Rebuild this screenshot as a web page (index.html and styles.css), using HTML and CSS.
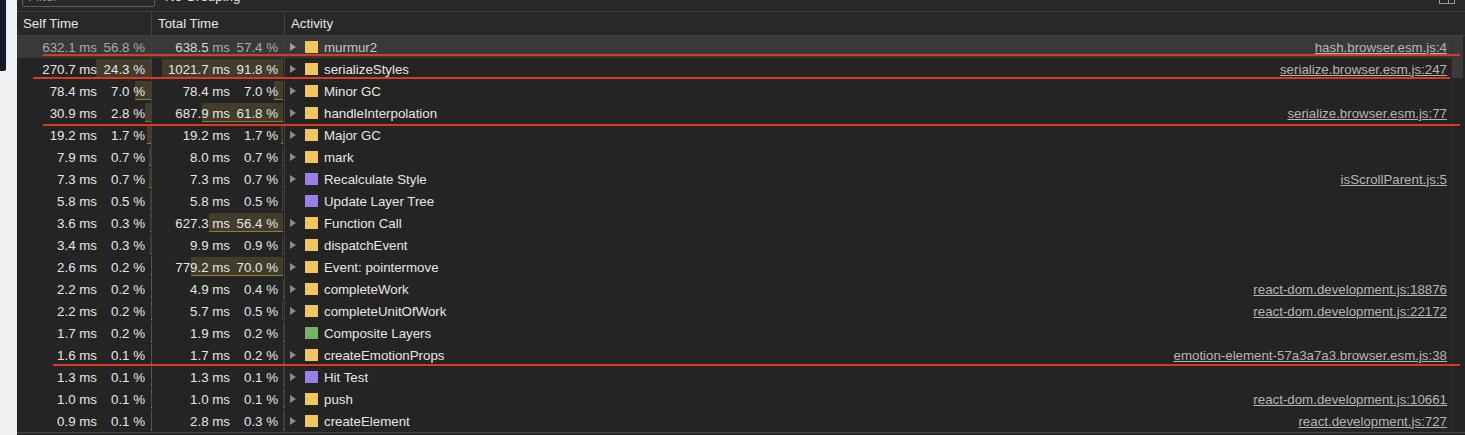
FILE: index.html
```
<!DOCTYPE html>
<html>
<head>
<meta charset="utf-8">
<link rel="stylesheet" href="styles.css">
</head>
<body>
<div class="page">
  <div class="side"><div class="nav"></div></div>
  <div class="panel">
    <div class="toolbar">
      <div class="filter">Filter</div>
      <div class="grouping">No Grouping</div>
      <svg class="dock" width="16" height="13" viewBox="0 0 16 13"><rect x="0.5" y="0.5" width="15" height="12" fill="none" stroke="#9a9a9a"/><line x1="9.5" y1="1" x2="9.5" y2="12" stroke="#9a9a9a"/></svg>
    </div>
    <div class="header">
      <div class="hcell">Self Time</div>
      <div class="hcell">Total Time</div>
      <div class="hcell last">Activity</div>
    </div>
    <div class="body">
      <div class="rows">
        <div class="row sel">
          <div class="cell num"><span class="ms">632.1 ms</span><span class="pct">56.8 %</span></div>
          <div class="cell num tot"><span class="ms"><span class="hi">638.5</span> ms</span><span class="pct">57.4 %</span></div>
          <div class="cell act"><span class="tw"><svg width="6" height="8" viewBox="0 0 6 8"><path d="M0 0L6 4L0 8Z"/></svg></span><span class="sw y"></span><span class="name">murmur2</span><span class="link">hash.browser.esm.js:4</span></div>
        </div>
        <div class="row">
          <div class="cell num"><span class="bar" style="width:55px"></span><span class="ms">270.7 ms</span><span class="pct">24.3 %</span></div>
          <div class="cell num tot"><span class="bar" style="width:121px"></span><span class="ms">1021.7 ms</span><span class="pct">91.8 %</span></div>
          <div class="cell act"><span class="tw"><svg width="6" height="8" viewBox="0 0 6 8"><path d="M0 0L6 4L0 8Z"/></svg></span><span class="sw y"></span><span class="name">serializeStyles</span><span class="link">serialize.browser.esm.js:247</span></div>
        </div>
        <div class="row">
          <div class="cell num"><span class="bar" style="width:16px"></span><span class="ms">78.4 ms</span><span class="pct">7.0 %</span></div>
          <div class="cell num tot"><span class="bar" style="width:9px"></span><span class="ms">78.4 ms</span><span class="pct">7.0 %</span></div>
          <div class="cell act"><span class="tw"><svg width="6" height="8" viewBox="0 0 6 8"><path d="M0 0L6 4L0 8Z"/></svg></span><span class="sw y"></span><span class="name">Minor GC</span></div>
        </div>
        <div class="row">
          <div class="cell num"><span class="bar" style="width:6px"></span><span class="ms">30.9 ms</span><span class="pct">2.8 %</span></div>
          <div class="cell num tot"><span class="bar" style="width:81px"></span><span class="ms">687.9 ms</span><span class="pct">61.8 %</span></div>
          <div class="cell act"><span class="tw"><svg width="6" height="8" viewBox="0 0 6 8"><path d="M0 0L6 4L0 8Z"/></svg></span><span class="sw y"></span><span class="name">handleInterpolation</span><span class="link">serialize.browser.esm.js:77</span></div>
        </div>
        <div class="row">
          <div class="cell num"><span class="bar" style="width:4px"></span><span class="ms">19.2 ms</span><span class="pct">1.7 %</span></div>
          <div class="cell num tot"><span class="bar" style="width:2px"></span><span class="ms">19.2 ms</span><span class="pct">1.7 %</span></div>
          <div class="cell act"><span class="tw"><svg width="6" height="8" viewBox="0 0 6 8"><path d="M0 0L6 4L0 8Z"/></svg></span><span class="sw y"></span><span class="name">Major GC</span></div>
        </div>
        <div class="row">
          <div class="cell num"><span class="bar" style="width:2px"></span><span class="ms">7.9 ms</span><span class="pct">0.7 %</span></div>
          <div class="cell num tot"><span class="bar" style="width:1px"></span><span class="ms">8.0 ms</span><span class="pct">0.7 %</span></div>
          <div class="cell act"><span class="tw"><svg width="6" height="8" viewBox="0 0 6 8"><path d="M0 0L6 4L0 8Z"/></svg></span><span class="sw y"></span><span class="name">mark</span></div>
        </div>
        <div class="row">
          <div class="cell num"><span class="bar" style="width:2px"></span><span class="ms">7.3 ms</span><span class="pct">0.7 %</span></div>
          <div class="cell num tot"><span class="bar" style="width:1px"></span><span class="ms">7.3 ms</span><span class="pct">0.7 %</span></div>
          <div class="cell act"><span class="tw"><svg width="6" height="8" viewBox="0 0 6 8"><path d="M0 0L6 4L0 8Z"/></svg></span><span class="sw p"></span><span class="name">Recalculate Style</span><span class="link">isScrollParent.js:5</span></div>
        </div>
        <div class="row">
          <div class="cell num"><span class="bar" style="width:1px"></span><span class="ms">5.8 ms</span><span class="pct">0.5 %</span></div>
          <div class="cell num tot"><span class="bar" style="width:0.7px"></span><span class="ms">5.8 ms</span><span class="pct">0.5 %</span></div>
          <div class="cell act"><span class="tw"></span><span class="sw p"></span><span class="name">Update Layer Tree</span></div>
        </div>
        <div class="row">
          <div class="cell num"><span class="bar" style="width:0.7px"></span><span class="ms">3.6 ms</span><span class="pct">0.3 %</span></div>
          <div class="cell num tot"><span class="bar" style="width:74px"></span><span class="ms">627.3 ms</span><span class="pct">56.4 %</span></div>
          <div class="cell act"><span class="tw"><svg width="6" height="8" viewBox="0 0 6 8"><path d="M0 0L6 4L0 8Z"/></svg></span><span class="sw y"></span><span class="name">Function Call</span></div>
        </div>
        <div class="row">
          <div class="cell num"><span class="bar" style="width:0.7px"></span><span class="ms">3.4 ms</span><span class="pct">0.3 %</span></div>
          <div class="cell num tot"><span class="bar" style="width:1.2px"></span><span class="ms">9.9 ms</span><span class="pct">0.9 %</span></div>
          <div class="cell act"><span class="tw"><svg width="6" height="8" viewBox="0 0 6 8"><path d="M0 0L6 4L0 8Z"/></svg></span><span class="sw y"></span><span class="name">dispatchEvent</span></div>
        </div>
        <div class="row">
          <div class="cell num"><span class="bar" style="width:0.5px"></span><span class="ms">2.6 ms</span><span class="pct">0.2 %</span></div>
          <div class="cell num tot"><span class="bar" style="width:92px"></span><span class="ms">779.2 ms</span><span class="pct">70.0 %</span></div>
          <div class="cell act"><span class="tw"><svg width="6" height="8" viewBox="0 0 6 8"><path d="M0 0L6 4L0 8Z"/></svg></span><span class="sw y"></span><span class="name">Event: pointermove</span></div>
        </div>
        <div class="row">
          <div class="cell num"><span class="bar" style="width:0.5px"></span><span class="ms">2.2 ms</span><span class="pct">0.2 %</span></div>
          <div class="cell num tot"><span class="bar" style="width:0.5px"></span><span class="ms">4.9 ms</span><span class="pct">0.4 %</span></div>
          <div class="cell act"><span class="tw"><svg width="6" height="8" viewBox="0 0 6 8"><path d="M0 0L6 4L0 8Z"/></svg></span><span class="sw y"></span><span class="name">completeWork</span><span class="link">react-dom.development.js:18876</span></div>
        </div>
        <div class="row">
          <div class="cell num"><span class="bar" style="width:0.5px"></span><span class="ms">2.2 ms</span><span class="pct">0.2 %</span></div>
          <div class="cell num tot"><span class="bar" style="width:0.7px"></span><span class="ms">5.7 ms</span><span class="pct">0.5 %</span></div>
          <div class="cell act"><span class="tw"><svg width="6" height="8" viewBox="0 0 6 8"><path d="M0 0L6 4L0 8Z"/></svg></span><span class="sw y"></span><span class="name">completeUnitOfWork</span><span class="link">react-dom.development.js:22172</span></div>
        </div>
        <div class="row">
          <div class="cell num"><span class="bar" style="width:0.5px"></span><span class="ms">1.7 ms</span><span class="pct">0.2 %</span></div>
          <div class="cell num tot"><span class="bar" style="width:0.3px"></span><span class="ms">1.9 ms</span><span class="pct">0.2 %</span></div>
          <div class="cell act"><span class="tw"></span><span class="sw g"></span><span class="name">Composite Layers</span></div>
        </div>
        <div class="row">
          <div class="cell num"><span class="bar" style="width:0.3px"></span><span class="ms">1.6 ms</span><span class="pct">0.1 %</span></div>
          <div class="cell num tot"><span class="bar" style="width:0.3px"></span><span class="ms">1.7 ms</span><span class="pct">0.2 %</span></div>
          <div class="cell act"><span class="tw"><svg width="6" height="8" viewBox="0 0 6 8"><path d="M0 0L6 4L0 8Z"/></svg></span><span class="sw y"></span><span class="name">createEmotionProps</span><span class="link">emotion-element-57a3a7a3.browser.esm.js:38</span></div>
        </div>
        <div class="row">
          <div class="cell num"><span class="bar" style="width:0.3px"></span><span class="ms">1.3 ms</span><span class="pct">0.1 %</span></div>
          <div class="cell num tot"><span class="bar" style="width:0.2px"></span><span class="ms">1.3 ms</span><span class="pct">0.1 %</span></div>
          <div class="cell act"><span class="tw"><svg width="6" height="8" viewBox="0 0 6 8"><path d="M0 0L6 4L0 8Z"/></svg></span><span class="sw p"></span><span class="name">Hit Test</span></div>
        </div>
        <div class="row">
          <div class="cell num"><span class="bar" style="width:0.3px"></span><span class="ms">1.0 ms</span><span class="pct">0.1 %</span></div>
          <div class="cell num tot"><span class="bar" style="width:0.2px"></span><span class="ms">1.0 ms</span><span class="pct">0.1 %</span></div>
          <div class="cell act"><span class="tw"><svg width="6" height="8" viewBox="0 0 6 8"><path d="M0 0L6 4L0 8Z"/></svg></span><span class="sw y"></span><span class="name">push</span><span class="link">react-dom.development.js:10661</span></div>
        </div>
        <div class="row">
          <div class="cell num"><span class="bar" style="width:0.3px"></span><span class="ms">0.9 ms</span><span class="pct">0.1 %</span></div>
          <div class="cell num tot"><span class="bar" style="width:0.4px"></span><span class="ms">2.8 ms</span><span class="pct">0.3 %</span></div>
          <div class="cell act"><span class="tw"><svg width="6" height="8" viewBox="0 0 6 8"><path d="M0 0L6 4L0 8Z"/></svg></span><span class="sw y"></span><span class="name">createElement</span><span class="link">react.development.js:727</span></div>
        </div>
      </div>
      <div class="scroll"><div class="thumb"></div></div>
    </div>
    <div class="footer"></div>
  </div>
  <div class="mark m1"></div>
  <div class="mark m2"></div>
  <div class="mark m3"></div>
  <div class="mark m4"></div>
</div>
</body>
</html>
```
FILE: styles.css
```
* { box-sizing: border-box; }
html, body { margin: 0; padding: 0; }
body {
  font-family: "Liberation Sans", Arial, sans-serif;
  font-size: 13.3px;
  background: #eff0f2;
  overflow: hidden;
}
.page {
  position: relative;
  display: flex;
  width: 1465px;
  height: 435px;
}
.side { width: 17px; flex: none; background: #eff0f2; }
.nav { width: 6px; height: 71px; background: #141a2c; border-bottom-right-radius: 2px; }
.panel {
  flex: 1;
  min-width: 0;
  display: flex;
  flex-direction: column;
  background: #242424;
  color: #e6e6e6;
}
.toolbar {
  height: 12px;
  flex: none;
  display: flex;
  align-items: flex-end;
  padding: 0 0 4px 5px;
  border-bottom: 1px solid #3c3c3c;
  overflow: hidden;
  background: #282828;
}
.filter {
  width: 133px;
  height: 20px;
  flex: none;
  border: 1px solid #5f5f5f;
  border-radius: 2px;
  color: #9a9a9a;
  padding-left: 5px;
  line-height: 18px;
}
.grouping { margin-left: 10px; height: 20px; line-height: 20px; flex: none; }
.dock { margin-left: auto; margin-right: 10px; margin-bottom: 3px; flex: none; }
.header {
  height: 24px;
  flex: none;
  display: grid;
  grid-template-columns: 135px 133px 1fr;
  border-bottom: 1px solid #3c3c3c;
  background: #282828;
}
.hcell { padding-left: 6px; line-height: 23px; border-right: 1px solid #424242; }
.hcell.last { border-right: none; }
.body { flex: 1; min-height: 0; display: flex; }
.rows { flex: 1; min-width: 0; }
.row {
  display: grid;
  grid-template-columns: 135px 133px 1fr;
  height: 22px;
}
.row.sel { background: #393939; color: #a9a9a9; }
.row.sel .hi { color: #d6d6d6; }
.row.sel .name { color: #c4c4c4; }
.cell { position: relative; display: flex; align-items: center; min-width: 0; }
.num {
  justify-content: flex-end;
  padding-right: 6px;
  border-right: 1px solid #3f3f3f;
}
.ms, .pct { position: relative; white-space: nowrap; }
.pct { width: 48px; text-align: right; flex: none; }
.bar {
  position: absolute;
  right: 0;
  top: 1px;
  height: 19px;
  background: rgba(240, 200, 86, 0.15);
  border-bottom: 1px solid rgba(240, 200, 86, 0.45);
}
.tot .bar { right: 1px; }
.act { padding: 0 4px 0 5px; }
.tw { width: 6px; height: 8px; margin-right: 9px; flex: none; display: flex; }
.tw svg { fill: #8b8b8b; }
.sel .tw svg { fill: #a0a0a0; }
.sw { width: 13px; height: 12px; margin-right: 6px; flex: none; }
.sw.y { background: #f2c65d; }
.sw.p { background: #9b7fe6; }
.sw.g { background: #74b266; }
.name { white-space: nowrap; }
.link {
  margin-left: auto;
  color: #b5b5b5;
  text-decoration: underline;
  white-space: nowrap;
}
.scroll { width: 14px; flex: none; border-left: 1px solid #2e2e2e; }
.thumb { height: 42px; margin-right: 2px; background: #3a3a3a; }
.footer { height: 3px; flex: none; border-top: 1px solid #444444; background: #2a2a2a; }
.mark { position: absolute; height: 2px; background: #d93a20; }
.m1 { top: 54px; left: 43px; width: 1417px; }
.m2 { top: 77px; left: 33px; width: 1417px; }
.m3 { top: 124px; left: 43px; width: 1417px; }
.m4 { top: 364px; left: 53px; width: 1407px; }
```
